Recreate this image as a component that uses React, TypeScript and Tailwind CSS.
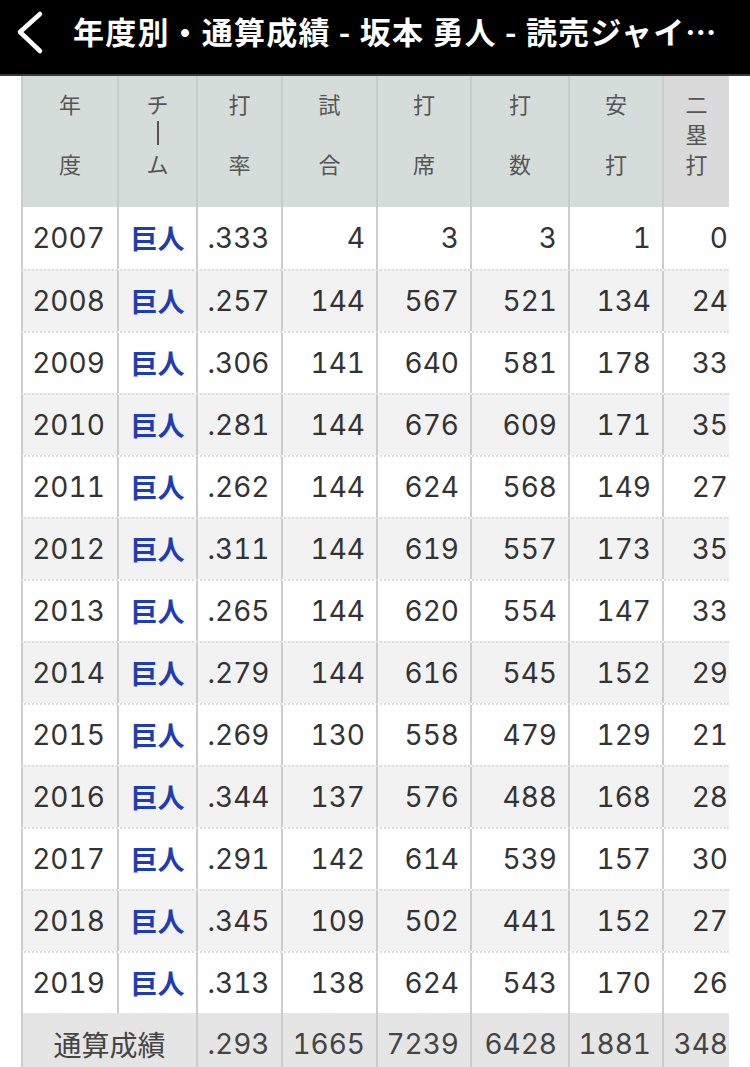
import React from "react"

const rows = [
  ["2007", ".333", "4", "3", "3", "1", "0"],
  ["2008", ".257", "144", "567", "521", "134", "24"],
  ["2009", ".306", "141", "640", "581", "178", "33"],
  ["2010", ".281", "144", "676", "609", "171", "35"],
  ["2011", ".262", "144", "624", "568", "149", "27"],
  ["2012", ".311", "144", "619", "557", "173", "35"],
  ["2013", ".265", "144", "620", "554", "147", "33"],
  ["2014", ".279", "144", "616", "545", "152", "29"],
  ["2015", ".269", "130", "558", "479", "129", "21"],
  ["2016", ".344", "137", "576", "488", "168", "28"],
  ["2017", ".291", "142", "614", "539", "157", "30"],
  ["2018", ".345", "109", "502", "441", "152", "27"],
  ["2019", ".313", "138", "624", "543", "170", "26"],
]

const total = [".293", "1665", "7239", "6428", "1881", "348"]

// three slots per header, null = empty, "|" = vertical long sound mark
const headers: (string | null)[][] = [
  ["年", null, "度"],
  ["チ", "|", "ム"],
  ["打", null, "率"],
  ["試", null, "合"],
  ["打", null, "席"],
  ["打", null, "数"],
  ["安", null, "打"],
  ["二", "塁", "打"],
]

const grid =
  "grid grid-cols-[96px_79px_85px_95px_94px_98px_94px_67px]"
const num = "font-['Inter','Noto_Sans_CJK_JP',sans-serif] tabular-nums font-[380]"

function HeaderCell({ slots, last }: { slots: (string | null)[]; last: boolean }) {
  return (
    <div
      className={`flex flex-col items-center pt-[12px] border-l-2 ${
        last ? "bg-[#d9dad9] border-[#c9cfcd]" : "bg-[#d5dddb] border-[#c6ccca]"
      }`}
    >
      {slots.map((s, i) => (
        <div key={i} className="h-[30px] flex items-center justify-center leading-[30px]">
          {s === "|" ? <div className="w-[2px] h-[24px] bg-[#555]" /> : s}
        </div>
      ))}
    </div>
  )
}

export default function App() {
  return (
    <div className="w-[750px] min-h-[1067px] bg-white font-['Noto_Sans_CJK_JP',sans-serif] overflow-hidden">
      <div className="h-[76px] bg-black border-b-2 border-[#3a3a3a] flex items-center">
        <svg width="60" height="74" viewBox="0 0 60 74" className="shrink-0">
          <path
            d="M40 14 L20 32 L40 51"
            fill="none"
            stroke="white"
            strokeWidth="4.5"
            strokeLinecap="round"
            strokeLinejoin="round"
          />
        </svg>
        <div className="ml-[13px] -mt-[12px] text-white font-bold text-[31px] whitespace-nowrap tracking-[1.2px]">
          年度別・通算成績 - 坂本 勇人 - 読売ジャイ…
        </div>
      </div>

      <div className="ml-[21px] w-[708px] overflow-hidden">
        <div className={`${grid} h-[131px] text-[22px] text-[#555]`}>
          {headers.map((h, i) => (
            <HeaderCell key={i} slots={h} last={i === headers.length - 1} />
          ))}
        </div>

        {rows.map((r, ri) => (
          <div
            key={r[0]}
            className={`${grid} h-[62px] text-[28px] text-[#333] ${
              ri % 2 === 1 ? "bg-[#f2f2f2]" : "bg-white"
            } ${ri > 0 ? "border-t-2 border-dotted border-[#dcdcdc]" : ""}`}
          >
            <div className={`${num} flex items-center justify-center pr-[3px] border-l-2 border-[#cccccc]`}>
              {r[0]}
            </div>
            <div className="flex items-center justify-center border-l-2 border-[#cccccc] text-[#1d3db3] font-bold text-[27px]">
              巨人
            </div>
            <div className={`${num} flex items-center justify-center pr-[2px] border-l-2 border-[#cccccc]`}>
              {r[1]}
            </div>
            {r.slice(2).map((v, ci) => (
              <div
                key={ci}
                className={`${num} flex items-center justify-end border-l-2 border-[#cccccc] ${
                  ci === 4 ? "pr-[1px]" : "pr-[11px]"
                }`}
              >
                {v}
              </div>
            ))}
          </div>
        ))}

        <div className={`${grid} h-[62px] bg-[#e5e5e5] text-[28px] text-[#444]`}>
          <div className="col-span-2 flex items-center justify-center border-l-2 border-[#cccccc]">
            通算成績
          </div>
          <div className={`${num} flex items-center justify-center pr-[2px] border-l-2 border-[#cccccc]`}>
            {total[0]}
          </div>
          {total.slice(1).map((v, ci) => (
            <div
              key={ci}
              className={`${num} flex items-center justify-end border-l-2 border-[#cccccc] ${
                ci === 4 ? "pr-[1px]" : "pr-[11px]"
              }`}
            >
              {v}
            </div>
          ))}
        </div>
      </div>
    </div>
  )
}
